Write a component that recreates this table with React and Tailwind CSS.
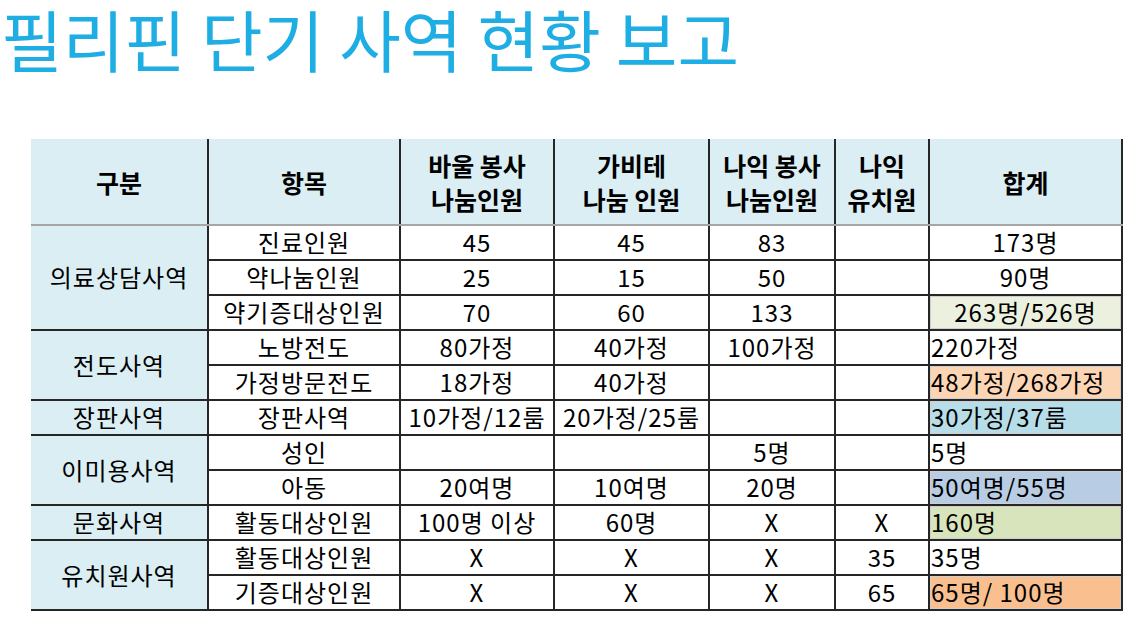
const HEADERS = [
  ['구분'],
  ['항목'],
  ['바울 봉사', '나눔인원'],
  ['가비테', '나눔 인원'],
  ['나익 봉사', '나눔인원'],
  ['나익', '유치원'],
  ['합계'],
];

const WIDTHS = [177, 192, 154, 155, 126, 94, 193];

// tone: background for the 합계 cell, center: whether the total is centred
const ROWS = [
  { group: '의료상담사역', span: 3, item: '진료인원', vals: ['45', '45', '83', ''], total: '173명', center: true },
  { item: '약나눔인원', vals: ['25', '15', '50', ''], total: '90명', center: true },
  { item: '약기증대상인원', vals: ['70', '60', '133', ''], total: '263명/526명', center: true, tone: 'bg-[#ebf1de]' },
  { group: '전도사역', span: 2, item: '노방전도', vals: ['80가정', '40가정', '100가정', ''], total: '220가정' },
  { item: '가정방문전도', vals: ['18가정', '40가정', '', ''], total: '48가정/268가정', tone: 'bg-[#fcd5b4]' },
  { group: '장판사역', span: 1, item: '장판사역', vals: ['10가정/12룸', '20가정/25룸', '', ''], total: '30가정/37룸', tone: 'bg-[#b7dee8]' },
  { group: '이미용사역', span: 2, item: '성인', vals: ['', '', '5명', ''], total: '5명' },
  { item: '아동', vals: ['20여명', '10여명', '20명', ''], total: '50여명/55명', tone: 'bg-[#b8cce4]' },
  { group: '문화사역', span: 1, item: '활동대상인원', vals: ['100명 이상', '60명', 'X', 'X'], total: '160명', tone: 'bg-[#d8e4bc]' },
  { group: '유치원사역', span: 2, item: '활동대상인원', vals: ['X', 'X', 'X', '35'], total: '35명' },
  { item: '기증대상인원', vals: ['X', 'X', 'X', '65'], total: '65명/ 100명', tone: 'bg-[#fabf8f]' },
];

const cell = 'border-2 border-[#262626] p-0 align-middle whitespace-nowrap';

export default function App() {
  return (
    <div className="w-[1136px] h-[626px] bg-white overflow-hidden font-['Noto_Sans_CJK_KR','Noto_Sans',sans-serif] text-black">
      <h1 className="pl-px text-[67px] leading-[76px] font-normal text-[#1eaee3]">
        필리핀 단기 사역 현황 보고
      </h1>

      <table className="ml-[31px] mt-[63px] w-[1091px] table-fixed border-collapse text-[24px] leading-[1.2] tracking-[1px]">
        <colgroup>
          {WIDTHS.map((w, i) => (
            <col key={i} style={{ width: w }} />
          ))}
        </colgroup>
        <thead>
          <tr className="h-[86px]">
            {HEADERS.map((lines, i) => (
              <th
                key={i}
                className={`${cell} border-t-0 border-b-[#a6a6a6] bg-[#daeef3] text-center text-[25px] font-bold leading-[34px] tracking-normal ${i === 0 ? 'border-l-0' : ''}`}
              >
                {lines.map(l => (
                  <div key={l}>{l}</div>
                ))}
              </th>
            ))}
          </tr>
        </thead>
        <tbody>
          {ROWS.map((row, r) => (
            <tr key={r} className="h-[35px]">
              {row.group && (
                <td rowSpan={row.span} className={`${cell} border-l-0 bg-[#daeef3] text-center`}>
                  {row.group}
                </td>
              )}
              <td className={`${cell} text-center`}>{row.item}</td>
              {row.vals.map((v, i) => (
                <td key={i} className={`${cell} text-center`}>{v}</td>
              ))}
              <td
                className={`${cell} ${row.center ? 'text-center' : 'text-left pl-px'} ${
                  row.tone ? `${row.tone} shadow-[inset_0_0_0_1px_#cfcfcf]` : ''
                }`}
              >
                {row.total}
              </td>
            </tr>
          ))}
        </tbody>
      </table>
    </div>
  );
}
